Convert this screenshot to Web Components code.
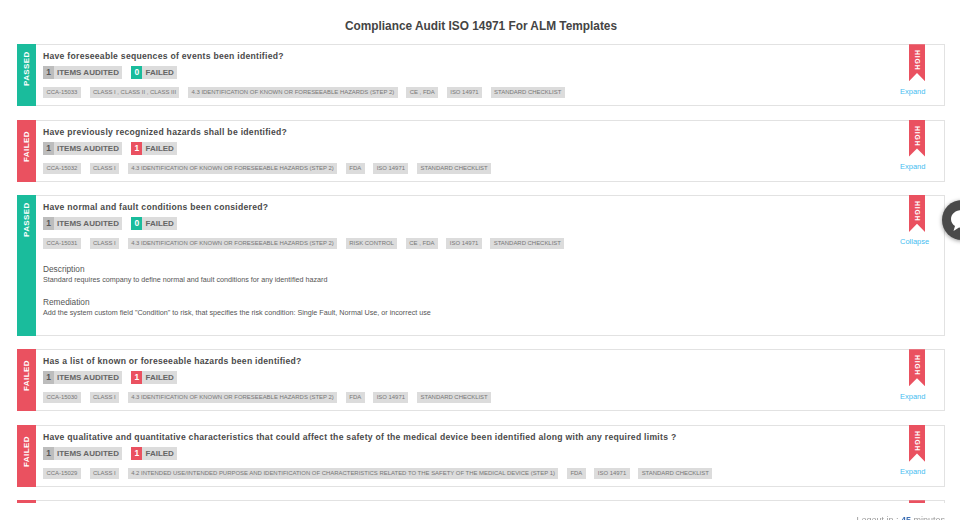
<!DOCTYPE html>
<html lang="en">
<head>
<meta charset="UTF-8" />
<title>Compliance Audit</title>
<style>
    html, body { margin: 0; height: 520px; overflow: hidden; background: #fff; }
    body { font-family: "Liberation Sans", Arial, sans-serif; color: #555; }
</style>
</head>
<body>
<audit-page>
    <audit-card status="passed" question="Have foreseeable sequences of events been identified?" failed="0" action="Expand"
        tags="CCA-15033|CLASS I , CLASS II , CLASS III|4.3 IDENTIFICATION OF KNOWN OR FORESEEABLE HAZARDS (STEP 2)|CE , FDA|ISO 14971|STANDARD CHECKLIST"></audit-card>
    <audit-card status="failed" question="Have previously recognized hazards shall be identified?" failed="1" action="Expand"
        tags="CCA-15032|CLASS I|4.3 IDENTIFICATION OF KNOWN OR FORESEEABLE HAZARDS (STEP 2)|FDA|ISO 14971|STANDARD CHECKLIST"></audit-card>
    <audit-card status="passed" question="Have normal and fault conditions been considered?" failed="0" action="Collapse"
        tags="CCA-15031|CLASS I|4.3 IDENTIFICATION OF KNOWN OR FORESEEABLE HAZARDS (STEP 2)|RISK CONTROL|CE , FDA|ISO 14971|STANDARD CHECKLIST">
        <audit-note heading="Description">Standard requires company to define normal and fault conditions for any identified hazard</audit-note>
        <audit-note heading="Remediation">Add the system custom field "Condition" to risk, that specifies the risk condition: Single Fault, Normal Use, or incorrect use</audit-note>
    </audit-card>
    <audit-card status="failed" question="Has a list of known or foreseeable hazards been identified?" failed="1" action="Expand"
        tags="CCA-15030|CLASS I|4.3 IDENTIFICATION OF KNOWN OR FORESEEABLE HAZARDS (STEP 2)|FDA|ISO 14971|STANDARD CHECKLIST"></audit-card>
    <audit-card status="failed" question="Have qualitative and quantitative characteristics that could affect the safety of the medical device been identified along with any required limits ?" failed="1" action="Expand"
        tags="CCA-15029|CLASS I|4.2 INTENDED USE/INTENDED PURPOSE AND IDENTIFICATION OF CHARACTERISTICS RELATED TO THE SAFETY OF THE MEDICAL DEVICE (STEP 1)|FDA|ISO 14971|STANDARD CHECKLIST"></audit-card>
    <!-- only the top edge of the next card shows above the footer -->
    <audit-card status="failed" stub></audit-card>
</audit-page>
<logout-note minutes="45"></logout-note>
<chat-button></chat-button>

<script>
    // Page wrapper with the title on top and the cards below it
    class AuditPage extends HTMLElement {
        constructor() {
            super();
            this.attachShadow({ mode: 'open' });
            this.shadowRoot.innerHTML = `
                <style>
                    :host { display: block; height: 503px; overflow: hidden; padding: 0 15px 0 17px; }
                    h1 {
                        margin: 0;
                        padding-top: 19px;
                        height: 25.2px;
                        line-height: 14px;
                        font-size: 11.85px;
                        font-weight: bold;
                        text-align: center;
                        color: #444;
                    }
                    .list { display: flex; flex-direction: column; gap: 13.4px; }
                </style>
                <h1>Compliance Audit ISO 14971 For ALM Templates</h1>
                <div class="list"><slot></slot></div>`;
        }
    }

    // One audit question, status strip on the left and ribbon on the right
    class AuditCard extends HTMLElement {
        constructor() {
            super();
            this.attachShadow({ mode: 'open' });
        }

        connectedCallback() {
            const status = this.getAttribute('status');
            const failed = this.getAttribute('failed');
            const stub = this.hasAttribute('stub');
            const tags = (this.getAttribute('tags') || '').split('|').filter(Boolean);
            const color = status === 'passed' ? '#1abc9c' : '#ea5160';
            const styles = `
                <style>
                    :host { display: block; }
                    .card {
                        display: flex;
                        min-height: 60px;
                        border: 1px solid #e2e2e2;
                        border-left: 0;
                        background: #fff;
                    }
                    .strip {
                        flex: none;
                        width: 19px;
                        margin: -1px 0;
                        background: ${color};
                        color: #fff;
                        display: flex;
                        justify-content: center;
                    }
                    .strip span {
                        writing-mode: vertical-rl;
                        transform: rotate(180deg);
                        font-size: 8px;
                        font-weight: bold;
                        letter-spacing: .4px;
                        height: 38px;
                        margin-top: 4px;
                        text-align: left;
                        line-height: 19px;
                    }
                    .body { flex: 1; min-width: 0; padding: 5px 0 0 7px; }
                    .q {
                        font-size: 8.6px;
                        font-weight: bold;
                        letter-spacing: .28px;
                        line-height: 12px;
                        height: 12px;
                        color: #4a4a4a;
                    }
                    .counts { display: flex; gap: 9.5px; margin-top: 4px; height: 13px; }
                    .count { display: flex; background: #dcdcdc; font-size: 8px; font-weight: bold; line-height: 13px; color: #666; }
                    .count b { width: 11px; text-align: center; background: #bdbdbd; color: #555; font-size: 8.5px; }
                    .count span { padding: 0 3px; }
                    .count.bad b { background: ${failed === '0' ? '#1abc9c' : '#ea5160'}; color: #fff; }
                    .tags { display: flex; gap: 8.7px; margin-top: 8px; }
                    .tag {
                        background: #dcdcdc;
                        color: #777;
                        font-size: 5.95px;
                        line-height: 11px;
                        height: 11px;
                        padding: 0 3.4px;
                        white-space: nowrap;
                    }
                    .notes { padding-top: 15px; padding-bottom: 5px; }
                    .side { flex: none; width: 62px; padding-left: 18px; box-sizing: border-box; display: flex; flex-direction: column; align-items: flex-start; }
                    .ribbon {
                        width: 16px;
                        height: 37px;
                        margin: -1px 0 0 9px;
                        background: #ea5160;
                        clip-path: polygon(0 0, 100% 0, 100% 100%, 50% 78%, 0 100%);
                        color: #fff;
                        display: flex;
                        justify-content: center;
                    }
                    .ribbon span {
                        writing-mode: vertical-rl;
                        font-size: 7px;
                        font-weight: bold;
                        letter-spacing: .8px;
                        line-height: 16px;
                        margin-top: 6px;
                    }
                    .action { margin-top: 5.500px; font-size: 7.5px; line-height: 10px; color: #45bdf0; }
                </style>`;
            if (stub) {
                this.shadowRoot.innerHTML = `${styles}
                    <div class="card">
                        <div class="strip"></div>
                        <div class="body"></div>
                        <div class="side"><div class="ribbon"></div></div>
                    </div>`;
                return;
            }
            this.shadowRoot.innerHTML = `${styles}
                <div class="card">
                    <div class="strip"><span>${status.toUpperCase()}</span></div>
                    <div class="body">
                        <div class="q">${this.getAttribute('question')}</div>
                        <div class="counts">
                            <div class="count items"><b>1</b><span>ITEMS AUDITED</span></div>
                            <div class="count bad"><b>${failed}</b><span>FAILED</span></div>
                        </div>
                        <div class="tags">${tags.map((t) => `<span class="tag">${t}</span>`).join('')}</div>
                        ${this.children.length ? '<div class="notes"><slot></slot></div>' : ''}
                    </div>
                    <div class="side">
                        <div class="ribbon"><span>HIGH</span></div>
                        <div class="action">${this.getAttribute('action')}</div>
                    </div>
                </div>`;
        }
    }

    // Heading plus one line of text inside an expanded card
    class AuditNote extends HTMLElement {
        constructor() {
            super();
            this.attachShadow({ mode: 'open' });
            this.shadowRoot.innerHTML = `
                <style>
                    :host { display: block; margin-bottom: 12px; }
                    .h { font-size: 8.3px; line-height: 11px; color: #555; }
                    .t { font-size: 7.2px; line-height: 10px; color: #555; }
                </style>
                <div class="h">${this.getAttribute('heading')}</div>
                <div class="t"><slot></slot></div>`;
        }
    }

    // Session note cut off by the bottom edge
    class LogoutNote extends HTMLElement {
        constructor() {
            super();
            this.attachShadow({ mode: 'open' });
            this.shadowRoot.innerHTML = `
                <style>
                    :host { position: fixed; right: 15px; top: 515px; font-size: 9px; line-height: 11px; color: #999; }
                    b { color: #3d6fb4; }
                </style>
                Logout in : <b>${this.getAttribute('minutes')}</b> minutes`;
        }
    }

    // Round chat launcher, mostly off the right edge
    class ChatButton extends HTMLElement {
        constructor() {
            super();
            this.attachShadow({ mode: 'open' });
            this.shadowRoot.innerHTML = `
                <style>
                    :host { position: fixed; left: 942px; top: 200px; width: 40px; height: 40px; border-radius: 50%; background: #4a4a4a; box-shadow: 0 1px 4px rgba(0,0,0,.4); display: block; }
                    svg { position: absolute; left: 7px; top: 9px; }
                </style>
                <svg width="26" height="24" viewBox="0 0 26 24"><path d="M13 1C6.500 1 2 5 2 10c0 3 1.600 5.400 4 7l-1.500 5 5.500-3.400c1 .2 2 .4 3 .4 6.500 0 11-4 11-9S19.500 1 13 1z" fill="#fff"/></svg>`;
        }
    }

    customElements.define('audit-page', AuditPage);
    customElements.define('audit-card', AuditCard);
    customElements.define('audit-note', AuditNote);
    customElements.define('logout-note', LogoutNote);
    customElements.define('chat-button', ChatButton);
</script>
</body>
</html>
